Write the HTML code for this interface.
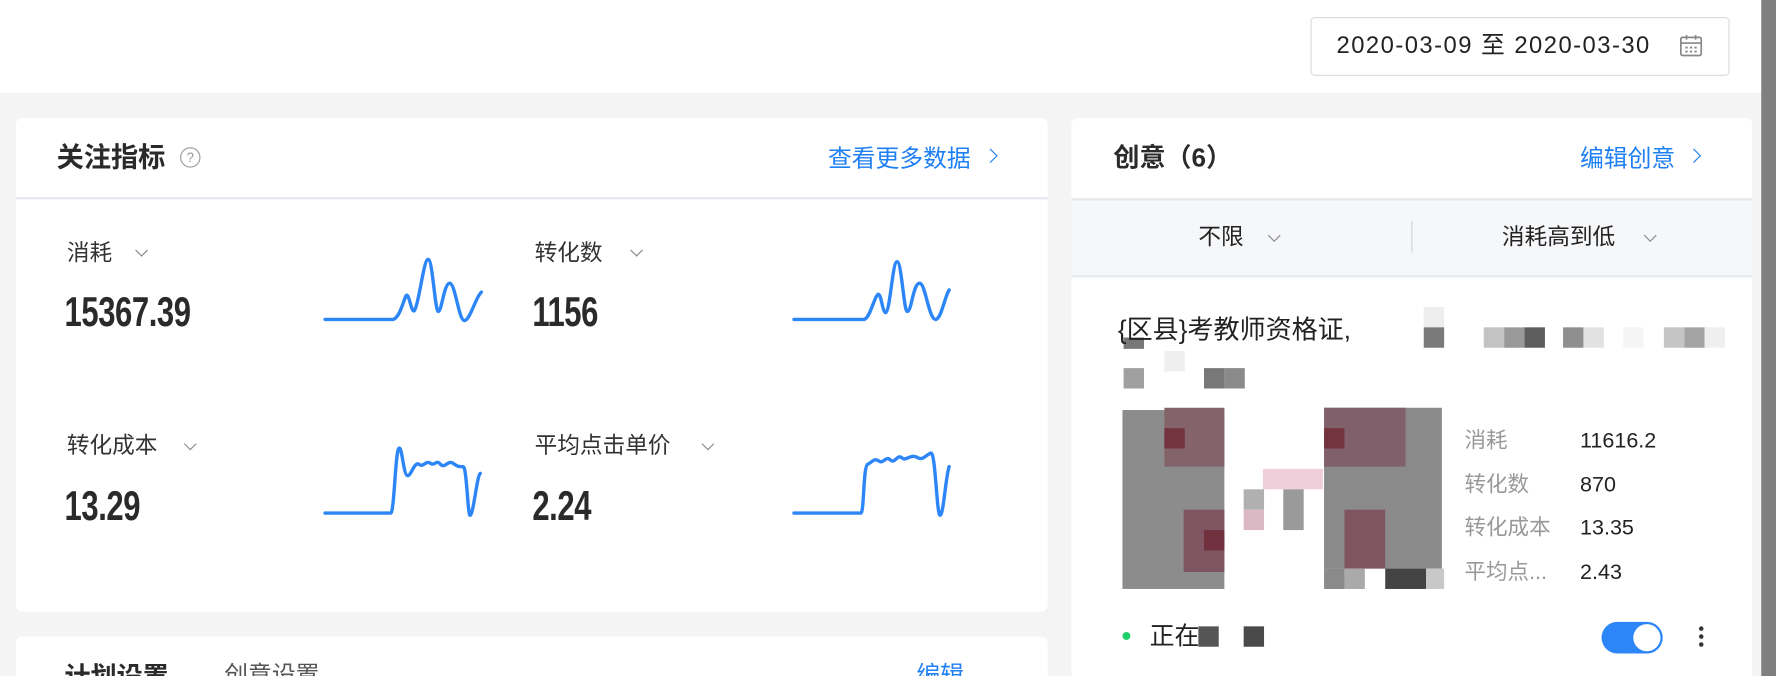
<!DOCTYPE html>
<html><head><meta charset="utf-8"><style>
html,body{margin:0;padding:0;width:1776px;height:676px;overflow:hidden;background:#f4f4f5}
#w{position:absolute;left:0;top:0;width:1568px;height:597px;overflow:hidden;transform:scale(1.13265);transform-origin:0 0;font-family:"Liberation Sans","Noto Sans CJK SC",sans-serif;color:#222;background:#f4f4f5}
.a{position:absolute;white-space:nowrap;line-height:1.2}
.card{position:absolute;background:#fff;border-radius:6px}
.lbl{font-size:20px;color:#333}
.val{font-size:37px;font-weight:bold;color:#2a2a2a;transform:scaleX(.74);transform-origin:0 50%;letter-spacing:-0.5px}
.blue{color:#1f7ff5}
.chev{display:inline-block;width:7px;height:7px;border-right:1.5px solid #888;border-bottom:1.5px solid #888;transform:rotate(45deg);}
.px{position:absolute}
.sl{font-size:19px;color:#999}
.sv{font-size:19px;color:#222}
</style></head><body><div id="w">
<div class="a" style="left:0;top:0;width:1555px;height:82px;background:#fff"></div>
<div class="a" style="left:1555px;top:0;width:13px;height:597px;background:#7f7f7f"></div>
<div class="a" style="left:1157px;top:15px;width:368px;height:50px;border:1px solid #d8dbe0;border-radius:4px;background:#fff"></div>
<div class="a" style="left:1180px;top:28px;font-size:21px;letter-spacing:1.3px;color:#222">2020-03-09 至 2020-03-30</div>
<svg class="a" style="left:1482px;top:29px" width="22" height="22" viewBox="0 0 22 22" fill="none" stroke="#888" stroke-width="1.5"><rect x="2" y="4" width="18" height="16" rx="1.5"/><path d="M2 9h18M7 2v4M15 2v4"/><path d="M6 13h2M10 13h2M14 13h2M6 16.5h2M10 16.5h2M14 16.5h2" stroke-width="1.6"/></svg>

<div class="card" style="left:14px;top:104px;width:911px;height:436px"></div>
<div class="a" style="left:14px;top:174px;width:911px;height:2px;background:#e6e9ee"></div>
<div class="a" style="left:50px;top:126px;font-size:24px;font-weight:bold;color:#2a2a2a">关注指标</div>
<div class="a" style="left:159px;top:130px;width:16px;height:16px;border:1.5px solid #999;border-radius:50%;font-size:12px;color:#999;text-align:center;line-height:16px">?</div>
<div class="a blue" style="left:731px;top:128px;font-size:21px">查看更多数据</div>
<div class="a" style="left:870px;top:128px"><span class="chev" style="transform:rotate(-45deg);border-color:#1f7ff5;width:8px;height:8px"></span></div>

<div class="a lbl" style="left:59px;top:212px">消耗</div><div class="a" style="left:121px;top:211px"><span class="chev"></span></div>
<div class="a val" style="left:57px;top:254px">15367.39</div>
<div class="a lbl" style="left:472px;top:212px">转化数</div><div class="a" style="left:558px;top:211px"><span class="chev"></span></div>
<div class="a val" style="left:470px;top:254px">1156</div>
<div class="a lbl" style="left:59px;top:382px">转化成本</div><div class="a" style="left:164px;top:382px"><span class="chev"></span></div>
<div class="a val" style="left:57px;top:425px">13.29</div>
<div class="a lbl" style="left:472px;top:382px">平均点击单价</div><div class="a" style="left:621px;top:382px"><span class="chev"></span></div>
<div class="a val" style="left:470px;top:425px">2.24</div>

<svg class="a" style="left:0;top:0" width="1568" height="597" fill="none" stroke="#2d86f7" stroke-width="3" stroke-linecap="round" stroke-linejoin="round">
<path d="M287 282 L347 282 C352 281 355 270 358 262 C361 255 363 278 366 274 C370 268 374 229 378 229 C382 229 384 275 387 275 C390 275 392 250 397 250 C402 250 405 283 410 283 C415 283 420 262 425 258"/>
<path d="M701 282 L763 282 C768 281 772 262 775 260 C778 258 779 276 782 276 C786 274 788 231 792 231 C796 231 798 275 801 275 C805 275 806 250 812 250 C817 250 820 282 826 282 C831 282 834 262 838 256"/>
<path d="M287 453 L345 453 C348 453 349 400 352 396 C355 392 356 420 360 420 C363 420 366 407 370 410 C374 413 376 406 380 409 C384 412 385 405 389 410 C393 414 395 406 400 409 C404 412 405 412 409 412 C412 412 413 455 415 455 C418 455 421 420 424 418"/>
<path d="M701 453 L760 453 C763 453 762 412 766 410 C770 408 772 404 776 407 C780 410 782 402 786 406 C790 410 792 401 796 404 C800 408 804 400 810 404 C815 407 818 401 822 400 C826 400 827 455 830 455 C833 455 835 420 838 412"/>
</svg>

<div class="card" style="left:14px;top:562px;width:911px;height:60px"></div>
<div class="a" style="left:57px;top:584px;font-size:23px;font-weight:bold;color:#2a2a2a">计划设置</div>
<div class="a" style="left:198px;top:584px;font-size:21px;color:#555">创意设置</div>
<div class="a blue" style="left:809px;top:584px;font-size:21px">编辑</div>

<div class="card" style="left:946px;top:104px;width:601px;height:500px"></div>
<div class="a" style="left:983px;top:126px;font-size:23px;font-weight:bold;color:#2a2a2a">创意（6）</div>
<div class="a blue" style="left:1395px;top:128px;font-size:21px">编辑创意</div>
<div class="a" style="left:1491px;top:128px"><span class="chev" style="transform:rotate(-45deg);border-color:#1f7ff5;width:8px;height:8px"></span></div>
<div class="a" style="left:946px;top:175px;width:601px;height:70px;background:#f6f7f9;border-top:2px solid #e6e9ee;border-bottom:2px solid #e6e9ee;box-sizing:border-box"></div>
<div class="a lbl" style="left:1058px;top:198px;color:#222">不限</div><div class="a" style="left:1121px;top:198px"><span class="chev"></span></div>
<div class="a" style="left:1246px;top:195px;width:1px;height:28px;background:#d0d3d8"></div>
<div class="a lbl" style="left:1326px;top:198px;color:#222">消耗高到低</div><div class="a" style="left:1453px;top:198px"><span class="chev"></span></div>

<div class="px" style="left:1257px;top:271px;width:18px;height:18px;background:#eee"></div>
<div class="px" style="left:1257px;top:289px;width:18px;height:18px;background:#7a7a7a"></div>
<div class="px" style="left:1310px;top:289px;width:18px;height:18px;background:#c3c3c3"></div>
<div class="px" style="left:1328px;top:289px;width:18px;height:18px;background:#999"></div>
<div class="px" style="left:1346px;top:289px;width:18px;height:18px;background:#5d5d5d"></div>
<div class="px" style="left:1380px;top:289px;width:18px;height:18px;background:#8f8f8f"></div>
<div class="px" style="left:1398px;top:289px;width:18px;height:18px;background:#e2e2e2"></div>
<div class="px" style="left:1433px;top:289px;width:18px;height:18px;background:#f5f5f5"></div>
<div class="px" style="left:1469px;top:289px;width:18px;height:18px;background:#c5c5c5"></div>
<div class="px" style="left:1487px;top:289px;width:18px;height:18px;background:#a4a4a4"></div>
<div class="px" style="left:1505px;top:289px;width:18px;height:18px;background:#efefef"></div>
<div class="px" style="left:992px;top:298px;width:18px;height:10px;background:#777"></div>
<div class="px" style="left:1028px;top:310px;width:18px;height:18px;background:#efefef"></div>
<div class="px" style="left:992px;top:325px;width:18px;height:18px;background:#a0a0a0"></div>
<div class="px" style="left:1063px;top:325px;width:18px;height:18px;background:#787878"></div>
<div class="px" style="left:1081px;top:325px;width:18px;height:18px;background:#8a8a8a"></div>
<div class="a" style="left:987px;top:278px;font-size:23px;color:#222">{区县}考教师资格证,</div>

<div class="px" style="left:991px;top:362px;width:90px;height:158px;background:#8c8c8c"></div>
<div class="px" style="left:1028px;top:360px;width:53px;height:52px;background:#84636b"></div>
<div class="px" style="left:1028px;top:378px;width:18px;height:18px;background:#73333f"></div>
<div class="px" style="left:1045px;top:450px;width:36px;height:55px;background:#7e5560"></div>
<div class="px" style="left:1063px;top:468px;width:18px;height:18px;background:#70303e"></div>
<div class="px" style="left:1115px;top:414px;width:53px;height:18px;background:#efcfda"></div>
<div class="px" style="left:1098px;top:432px;width:18px;height:18px;background:#b0b0b0"></div>
<div class="px" style="left:1098px;top:450px;width:18px;height:18px;background:#dbb8c4"></div>
<div class="px" style="left:1133px;top:432px;width:18px;height:36px;background:#9a9a9a"></div>
<div class="px" style="left:1169px;top:360px;width:104px;height:142px;background:#8a8a8a"></div>
<div class="px" style="left:1169px;top:360px;width:72px;height:52px;background:#80606a"></div>
<div class="px" style="left:1169px;top:378px;width:18px;height:18px;background:#74343f"></div>
<div class="px" style="left:1187px;top:450px;width:36px;height:52px;background:#7e5560"></div>
<div class="px" style="left:1169px;top:502px;width:18px;height:18px;background:#8a8a8a"></div>
<div class="px" style="left:1187px;top:502px;width:18px;height:18px;background:#aaa"></div>
<div class="px" style="left:1223px;top:502px;width:36px;height:18px;background:#444"></div>
<div class="px" style="left:1259px;top:502px;width:16px;height:18px;background:#c8c8c8"></div>

<div class="a sl" style="left:1293px;top:379px">消耗</div><div class="a sv" style="left:1395px;top:379px">11616.2</div>
<div class="a sl" style="left:1293px;top:418px">转化数</div><div class="a sv" style="left:1395px;top:418px">870</div>
<div class="a sl" style="left:1293px;top:456px">转化成本</div><div class="a sv" style="left:1395px;top:456px">13.35</div>
<div class="a sl" style="left:1293px;top:495px">平均点...</div><div class="a sv" style="left:1395px;top:495px">2.43</div>

<div class="a" style="left:991px;top:558px;width:7px;height:7px;border-radius:50%;background:#1fd16b"></div>
<div class="a" style="left:1015px;top:549px;font-size:22px;color:#222">正在</div>
<div class="px" style="left:1058px;top:553px;width:18px;height:18px;background:#555"></div>
<div class="px" style="left:1098px;top:553px;width:18px;height:18px;background:#4a4a4a"></div>
<div class="a" style="left:1414px;top:549px;width:54px;height:28px;border-radius:14px;background:#2d86f7"></div>
<div class="a" style="left:1442px;top:551px;width:24px;height:24px;border-radius:50%;background:#fff"></div>
<div class="a" style="left:1500px;top:553px;width:4px;height:4px;border-radius:50%;background:#333;box-shadow:0 7px 0 #333,0 14px 0 #333"></div>
</div></body></html>
